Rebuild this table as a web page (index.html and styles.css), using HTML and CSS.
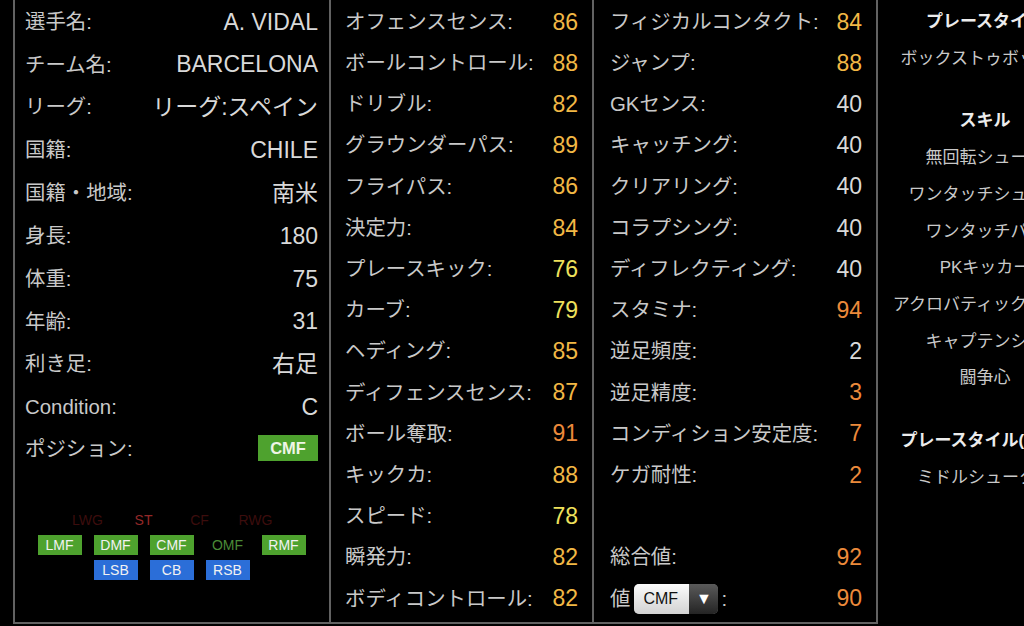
FILE: index.html
```html
<!DOCTYPE html>
<html lang="ja">
<head>
<meta charset="utf-8">
<title>Player</title>
<link rel="stylesheet" href="styles.css">
</head>
<body>
<div class="page">
  <section class="col col-info">
    <div class="row"><span class="lbl">選手名:</span><span class="val">A. VIDAL</span></div>
    <div class="row"><span class="lbl">チーム名:</span><span class="val">BARCELONA</span></div>
    <div class="row"><span class="lbl">リーグ:</span><span class="val">リーグ:スペイン</span></div>
    <div class="row"><span class="lbl">国籍:</span><span class="val">CHILE</span></div>
    <div class="row"><span class="lbl">国籍・地域:</span><span class="val">南米</span></div>
    <div class="row"><span class="lbl">身長:</span><span class="val">180</span></div>
    <div class="row"><span class="lbl">体重:</span><span class="val">75</span></div>
    <div class="row"><span class="lbl">年齢:</span><span class="val">31</span></div>
    <div class="row"><span class="lbl">利き足:</span><span class="val">右足</span></div>
    <div class="row"><span class="lbl">Condition:</span><span class="val">C</span></div>
    <div class="row"><span class="lbl">ポジション:</span><span class="pos-main">CMF</span></div>
    <div class="pos-grid">
      <div class="pos-row">
        <span class="pos dim">LWG</span><span class="pos red">ST</span><span class="pos dim">CF</span><span class="pos dim">RWG</span>
      </div>
      <div class="pos-row">
        <span class="pos green">LMF</span><span class="pos green">DMF</span><span class="pos green">CMF</span><span class="pos gtext">OMF</span><span class="pos green">RMF</span>
      </div>
      <div class="pos-row">
        <span class="pos blue">LSB</span><span class="pos blue">CB</span><span class="pos blue">RSB</span>
      </div>
    </div>
  </section>

  <section class="col col-stats col-a">
    <div class="srow"><span class="lbl">オフェンスセンス:</span><span class="num gold">86</span></div>
    <div class="srow"><span class="lbl">ボールコントロール:</span><span class="num gold">88</span></div>
    <div class="srow"><span class="lbl">ドリブル:</span><span class="num gold">82</span></div>
    <div class="srow"><span class="lbl">グラウンダーパス:</span><span class="num gold">89</span></div>
    <div class="srow"><span class="lbl">フライパス:</span><span class="num gold">86</span></div>
    <div class="srow"><span class="lbl">決定力:</span><span class="num gold">84</span></div>
    <div class="srow"><span class="lbl">プレースキック:</span><span class="num yellow">76</span></div>
    <div class="srow"><span class="lbl">カーブ:</span><span class="num yellow">79</span></div>
    <div class="srow"><span class="lbl">ヘディング:</span><span class="num gold">85</span></div>
    <div class="srow"><span class="lbl">ディフェンスセンス:</span><span class="num gold">87</span></div>
    <div class="srow"><span class="lbl">ボール奪取:</span><span class="num orange">91</span></div>
    <div class="srow"><span class="lbl">キックカ:</span><span class="num gold">88</span></div>
    <div class="srow"><span class="lbl">スピード:</span><span class="num yellow">78</span></div>
    <div class="srow"><span class="lbl">瞬発力:</span><span class="num gold">82</span></div>
    <div class="srow"><span class="lbl">ボディコントロール:</span><span class="num gold">82</span></div>
  </section>

  <section class="col col-stats col-b">
    <div class="srow"><span class="lbl">フィジカルコンタクト:</span><span class="num gold">84</span></div>
    <div class="srow"><span class="lbl">ジャンプ:</span><span class="num gold">88</span></div>
    <div class="srow"><span class="lbl">GKセンス:</span><span class="num white">40</span></div>
    <div class="srow"><span class="lbl">キャッチング:</span><span class="num white">40</span></div>
    <div class="srow"><span class="lbl">クリアリング:</span><span class="num white">40</span></div>
    <div class="srow"><span class="lbl">コラプシング:</span><span class="num white">40</span></div>
    <div class="srow"><span class="lbl">ディフレクティング:</span><span class="num white">40</span></div>
    <div class="srow"><span class="lbl">スタミナ:</span><span class="num orange">94</span></div>
    <div class="srow"><span class="lbl">逆足頻度:</span><span class="num white">2</span></div>
    <div class="srow"><span class="lbl">逆足精度:</span><span class="num orange">3</span></div>
    <div class="srow"><span class="lbl">コンディション安定度:</span><span class="num orange">7</span></div>
    <div class="srow"><span class="lbl">ケガ耐性:</span><span class="num orange">2</span></div>
    <div class="srow"></div>
    <div class="srow"><span class="lbl">総合値:</span><span class="num orange">92</span></div>
    <div class="srow">
      <span class="lbl sel-line">値<span class="select"><span class="sel-text">CMF</span><span class="sel-btn">▼</span></span>:</span>
      <span class="num orange">90</span>
    </div>
  </section>

  <section class="col col-skills">
    <div class="sk-section">
      <div class="sk-head">プレースタイル</div>
      <div class="sk-item">ボックストゥボックス</div>
    </div>
    <div class="sk-section">
      <div class="sk-head">スキル</div>
      <div class="sk-item">無回転シュート</div>
      <div class="sk-item">ワンタッチシュート</div>
      <div class="sk-item">ワンタッチパス</div>
      <div class="sk-item">PKキッカー</div>
      <div class="sk-item">アクロバティッククリア</div>
      <div class="sk-item">キャプテンシー</div>
      <div class="sk-item">闘争心</div>
    </div>
    <div class="sk-section">
      <div class="sk-head">プレースタイル(COM)</div>
      <div class="sk-item">ミドルシューター</div>
    </div>
  </section>
</div>
</body>
</html>
```

FILE: styles.css
```css
html, body {
  margin: 0;
  padding: 0;
  background: #000;
  overflow: hidden;
}

body {
  font-family: "Liberation Sans", "Noto Sans CJK JP", sans-serif;
  color: #cccccc;
}

.page {
  display: flex;
  align-items: flex-start;
  width: 1092px;
  height: 626px;
  padding-left: 13px;
  overflow: hidden;
}

.col {
  flex: none;
  box-sizing: border-box;
  border-left: 2px solid #626262;
  height: 624px;
}

.col-info,
.col-stats {
  border-bottom: 2px solid #626262;
}

/* ---------- column 1 ---------- */
.col-info {
  width: 316px;
  padding: 1px 11px 0 10px;
}

.row {
  display: flex;
  justify-content: space-between;
  align-items: center;
  height: 42.6px;
}

.row:nth-child(5) {
  height: 44px;
}

.lbl {
  font-size: 20.4px;
  line-height: 1;
  color: #c9c9c9;
  white-space: nowrap;
}

.val {
  font-size: 23px;
  line-height: 1;
  color: #d9d9d9;
  white-space: nowrap;
}

.pos-main {
  display: inline-flex;
  align-items: center;
  justify-content: center;
  width: 60px;
  height: 26px;
  margin-top: -3px;
  background: #4ea22e;
  color: #eef5e6;
  font-weight: bold;
  font-size: 16.5px;
}

.pos-grid {
  display: flex;
  flex-direction: column;
  gap: 5px;
  margin-top: 39px;
}

.pos-row {
  display: flex;
  justify-content: center;
  gap: 12px;
}

.pos {
  display: inline-flex;
  align-items: center;
  justify-content: center;
  width: 44px;
  height: 20px;
  font-size: 14px;
  color: #f2f2f2;
}

.pos.green { background: #4ea22e; }
.pos.blue { background: #2b6ed8; }
.pos.gtext { color: #4a8a37; }
.pos.dim { color: #3c0d0d; }
.pos.red { color: #932828; }

/* ---------- stat columns ---------- */
.col-a {
  width: 263px;
  padding: 1.5px 14px 0 14px;
}

.col-b {
  width: 284px;
  padding: 1.5px 14px 0 16px;
}

.srow {
  display: flex;
  justify-content: space-between;
  align-items: center;
  height: 41.2px;
}

.num {
  font-size: 23px;
  line-height: 1;
  white-space: nowrap;
}

.num.gold { color: #f2b845; }
.num.yellow { color: #eee15c; }
.num.orange { color: #ec8a3b; }
.num.white { color: #d9d9d9; }

.sel-line {
  display: inline-flex;
  align-items: center;
}

.select {
  display: inline-flex;
  width: 84px;
  height: 30px;
  margin: 0 3px 0 4px;
  border-radius: 5px;
  overflow: hidden;
  box-shadow: inset 0 0 0 1px #777;
}

.sel-text {
  flex: 1;
  display: flex;
  align-items: center;
  padding-left: 9px;
  font-size: 16px;
  color: #111;
  background: linear-gradient(#fbfbfb, #d2d2d2);
}

.sel-btn {
  width: 29px;
  display: flex;
  align-items: center;
  justify-content: center;
  font-size: 16px;
  color: #fff;
  background: linear-gradient(#5a5a5a, #242424);
}

/* ---------- skills column ---------- */
.col-skills {
  width: 216px;
  padding-top: 4px;
  display: flex;
  flex-direction: column;
  gap: 26px;
}

.sk-section {
  display: flex;
  flex-direction: column;
  align-items: center;
}

.sk-head,
.sk-item {
  font-size: 17px;
  line-height: 36.7px;
  white-space: nowrap;
}

.sk-head {
  font-weight: bold;
  color: #ececec;
}

.sk-item {
  color: #c9c9c9;
}
```
